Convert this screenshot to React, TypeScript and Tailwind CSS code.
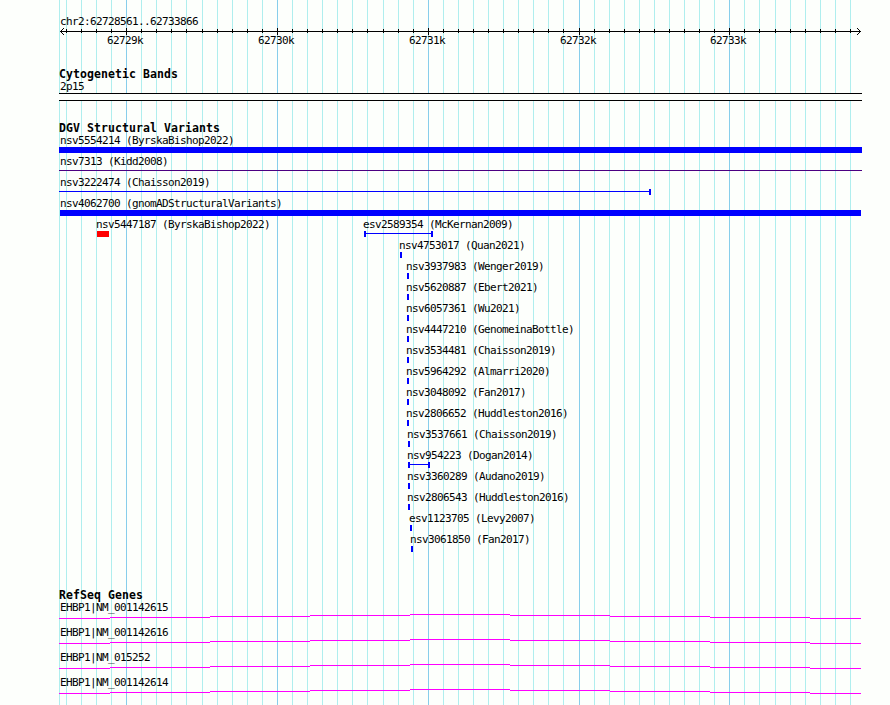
type Feature = {
  label: string;
  start: number;
  end: number;
  shape: 'bar' | 'line' | 'span' | 'openSpan';
  color?: string;
  labelX?: number;
};

const MINOR_LINES = [
  59, 66, 81, 96, 111, 141, 156, 171, 186, 202, 217, 232, 247, 262, 292, 307,
  322, 337, 352, 367, 383, 398, 413, 443, 458, 473, 488, 503, 518, 533, 548,
  563, 594, 609, 624, 639, 654, 669, 684, 699, 714, 744, 759, 775, 790, 805,
  820, 835, 850,
];
const MAJOR_LINES = [126, 277, 428, 579, 729];

const tick = (label: string, start: number): Feature[] => [
  { label, start, end: start + 2, shape: 'bar' },
];

const VARIANTS: Feature[][] = [
  [{ label: 'nsv5554214 (ByrskaBishop2022)', start: 59, end: 862, shape: 'bar', labelX: 60 }],
  [{ label: 'nsv7313 (Kidd2008)', start: 59, end: 862, shape: 'line', color: '#4b0082', labelX: 60 }],
  [{ label: 'nsv3222474 (Chaisson2019)', start: 59, end: 651, shape: 'openSpan', labelX: 60 }],
  [{ label: 'nsv4062700 (gnomADStructuralVariants)', start: 60, end: 861, shape: 'bar', labelX: 60 }],
  [
    { label: 'nsv5447187 (ByrskaBishop2022)', start: 97, end: 109, shape: 'bar', color: '#ff0000' },
    { label: 'esv2589354 (McKernan2009)', start: 364, end: 433, shape: 'span' },
  ],
  tick('nsv4753017 (Quan2021)', 400),
  tick('nsv3937983 (Wenger2019)', 407),
  tick('nsv5620887 (Ebert2021)', 407),
  tick('nsv6057361 (Wu2021)', 407),
  tick('nsv4447210 (GenomeinaBottle)', 407),
  tick('nsv3534481 (Chaisson2019)', 407),
  tick('nsv5964292 (Almarri2020)', 407),
  tick('nsv3048092 (Fan2017)', 407),
  tick('nsv2806652 (Huddleston2016)', 407),
  tick('nsv3537661 (Chaisson2019)', 408),
  [{ label: 'nsv954223 (Dogan2014)', start: 408, end: 430, shape: 'span' }],
  tick('nsv3360289 (Audano2019)', 408),
  tick('nsv2806543 (Huddleston2016)', 408),
  tick('esv1123705 (Levy2007)', 410),
  tick('nsv3061850 (Fan2017)', 411),
];

const GENES = [
  'EHBP1|NM_001142615',
  'EHBP1|NM_001142616',
  'EHBP1|NM_015252',
  'EHBP1|NM_001142614',
];

// x start, x end, y of each step of the intron hat
const INTRON_STEPS = [
  [59, 110, 4],
  [110, 210, 3],
  [210, 310, 2],
  [310, 410, 1],
  [410, 510, 0],
  [510, 610, 1],
  [610, 710, 2],
  [710, 810, 3],
  [810, 861, 4],
];

function GridLines() {
  return (
    <svg className="absolute inset-0" width="890" height="705" shapeRendering="crispEdges">
      {MINOR_LINES.map((x) => (
        <rect key={x} x={x} y="0" width="1" height="705" fill="#afeeee" />
      ))}
      {MAJOR_LINES.map((x) => (
        <rect key={x} x={x} y="0" width="1" height="705" fill="#87ceeb" />
      ))}
    </svg>
  );
}

function Ruler() {
  return (
    <>
      <svg className="-mb-px block" width="890" height="7" shapeRendering="crispEdges">
        <rect x="60" y="3" width="801" height="1" />
        {[1, 2, 3].map((d) => (
          <g key={d}>
            <rect x={60 + d} y={3 - d} width="1" height="1" />
            <rect x={60 + d} y={3 + d} width="1" height="1" />
            <rect x={860 - d} y={3 - d} width="1" height="1" />
            <rect x={860 - d} y={3 + d} width="1" height="1" />
          </g>
        ))}
        {MINOR_LINES.slice(1).map((x) => (
          <rect key={x} x={x} y="1" width="1" height="4" />
        ))}
        {MAJOR_LINES.map((x) => (
          <rect key={x} x={x} y="0" width="1" height="7" />
        ))}
      </svg>
      <div className="flex pl-[107px]">
        <span className="w-[151px]">62729k</span>
        <span className="w-[151px]">62730k</span>
        <span className="w-[151px]">62731k</span>
        <span className="w-[150px]">62732k</span>
        <span>62733k</span>
      </div>
    </>
  );
}

function TrackTitle({ children }: { children: string }) {
  return (
    <h2 className="h-3 pl-[59px] text-[11.5px] leading-[13px] font-bold tracking-[0.077px]">
      {children}
    </h2>
  );
}

function Glyph({ feature }: { feature: Feature }) {
  const { start, end, shape, color = '#0000ff' } = feature;
  if (shape === 'bar') {
    return <rect x={start} y="0" width={end - start} height="6" fill={color} />;
  }
  return (
    <g fill={color}>
      <rect x={start} y="2" width={end - start} height="1" />
      {shape === 'span' && <rect x={start} y="0" width="2" height="6" />}
      {shape !== 'line' && <rect x={end - 2} y="0" width="2" height="6" />}
    </g>
  );
}

function VariantRow({ features }: { features: Feature[] }) {
  return (
    <div className="h-[21px]">
      <div className="grid h-[13px]">
        {features.map((f) => (
          <span
            key={f.label}
            className="col-start-1 row-start-1"
            style={{ paddingLeft: f.labelX ?? f.start - 1 }}
          >
            {f.label}
          </span>
        ))}
      </div>
      <svg className="block" width="890" height="6" shapeRendering="crispEdges">
        {features.map((f) => (
          <Glyph key={f.label} feature={f} />
        ))}
      </svg>
    </div>
  );
}

function GeneRow({ name }: { name: string }) {
  return (
    <div className="h-[25px]">
      <div className="h-[13px] pl-[60px]">{name}</div>
      <svg className="block" width="890" height="5" shapeRendering="crispEdges">
        {INTRON_STEPS.map(([x1, x2, y]) => (
          <rect key={x1} x={x1} y={y} width={x2 - x1} height="1" fill="#ff00ff" />
        ))}
      </svg>
    </div>
  );
}

export default function App() {
  return (
    <main className="relative h-[705px] w-[890px] overflow-hidden bg-[#fdfffc] font-['DejaVu_Sans_Mono',monospace] text-[11px] leading-[13px] tracking-[-0.622px] whitespace-nowrap text-black">
      <GridLines />
      <div className="relative pt-[15px]">
        <div className="pl-[60px]">chr2:62728561..62733866</div>
        <Ruler />

        <section className="mt-[21px]">
          <TrackTitle>Cytogenetic Bands</TrackTitle>
          <div className="pl-[60px]">2p15</div>
          <div className="ml-[59px] h-2 w-[803px] border-y border-black bg-[#fdfffc]" />
        </section>

        <section className="mt-[21px]">
          <TrackTitle>DGV Structural Variants</TrackTitle>
          {VARIANTS.map((features) => (
            <VariantRow key={features[0].label} features={features} />
          ))}
        </section>

        <section className="mt-[35px]">
          <TrackTitle>RefSeq Genes</TrackTitle>
          {GENES.map((name) => (
            <GeneRow key={name} name={name} />
          ))}
        </section>
      </div>
    </main>
  );
}
